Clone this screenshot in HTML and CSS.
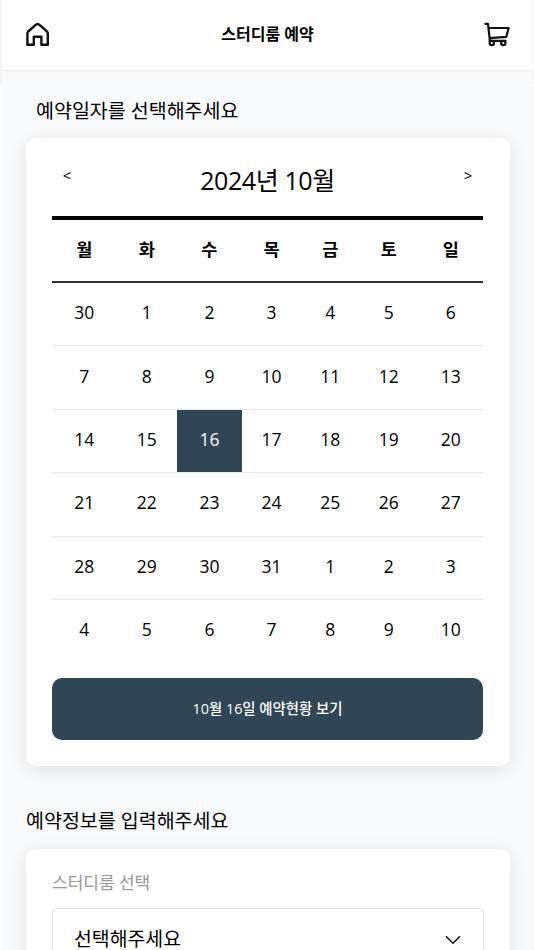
FILE: index.html
```html
<!DOCTYPE html>
<html lang="ko">
<head>
    <meta charset="UTF-8">
    <meta name="viewport" content="width=device-width, initial-scale=1.0">
    <title>스터디룸 예약</title>
    <link rel="stylesheet" href="styles.css">
</head>
<body>
    <div class="page">
        <header class="header">
            <svg class="icon" viewBox="0 0 26 26" fill="none" stroke="#111" stroke-width="2.4" stroke-linejoin="round">
                <path d="M2.4 23.8V12.3Q2.4 11.3 3.2 10.5L11 3.6Q12.6 2.4 14.2 3.6L22 10.5Q22.8 11.3 22.8 12.3V23.8H16.4V15.8H8.8V23.8Z"/>
            </svg>
            <h1 class="header-title">스터디룸 예약</h1>
            <svg class="icon" viewBox="0 0 26 26" fill="none" stroke="#111" stroke-width="2.2" stroke-linejoin="round" stroke-linecap="round">
                <path d="M1.4 2.8H4L5.6 17.2L22.3 15.9L24.6 7H4.5M5.6 17.2V19.8H21.5"/>
                <circle cx="7.8" cy="22" r="2.2"/>
                <circle cx="19.3" cy="22" r="2.2"/>
            </svg>
        </header>

        <main class="content">
            <h2 class="section-title date-title">예약일자를 선택해주세요</h2>
            <section class="card">
                <div class="month">
                    <button class="arrow">&lt;</button>
                    <span class="month-name">2024년 10월</span>
                    <button class="arrow">&gt;</button>
                </div>
                <table class="calendar">
                    <colgroup>
                        <col class="col-mon"><col class="col-tue"><col class="col-wed"><col class="col-thu"><col class="col-fri"><col class="col-sat"><col class="col-sun">
                    </colgroup>
                    <thead>
                        <tr><th>월</th><th>화</th><th>수</th><th>목</th><th>금</th><th>토</th><th>일</th></tr>
                    </thead>
                    <tbody>
                        <tr><td>30</td><td>1</td><td>2</td><td>3</td><td>4</td><td>5</td><td>6</td></tr>
                        <tr><td>7</td><td>8</td><td>9</td><td>10</td><td>11</td><td>12</td><td>13</td></tr>
                        <tr><td>14</td><td>15</td><td class="selected">16</td><td>17</td><td>18</td><td>19</td><td>20</td></tr>
                        <tr><td>21</td><td>22</td><td>23</td><td>24</td><td>25</td><td>26</td><td>27</td></tr>
                        <tr><td>28</td><td>29</td><td>30</td><td>31</td><td>1</td><td>2</td><td>3</td></tr>
                        <tr><td>4</td><td>5</td><td>6</td><td>7</td><td>8</td><td>9</td><td>10</td></tr>
                    </tbody>
                </table>
                <button class="status-btn">10월 16일 예약현황 보기</button>
            </section>

            <h2 class="section-title info-title">예약정보를 입력해주세요</h2>
            <section class="card info-card">
                <div class="label">스터디룸 선택</div>
                <div class="select">
                    <span>선택해주세요</span>
                    <svg class="chevron" viewBox="0 0 16 10" fill="none" stroke="#111" stroke-width="1.6">
                        <path d="M1 1.2L8 8.2L15 1.2"/>
                    </svg>
                </div>
            </section>
        </main>
    </div>
</body>
</html>
```

FILE: styles.css
```css
* {
    box-sizing: border-box;
}
body {
    margin: 0;
    height: 950px;
    overflow: hidden;
    padding: 0 1px 0 2px;
    background: linear-gradient(#f3f3f4 84px, #fdfdfd 84px);
    font-family: "Open Sans", "Noto Sans CJK KR", sans-serif;
    color: #000;
}
.page {
    height: 950px;
    overflow: hidden;
    background-color: #f8fafc;
}
.header {
    display: flex;
    justify-content: space-between;
    align-items: center;
    height: 71px;
    padding: 0 23px 2px;
    background-color: white;
    border-bottom: 1px solid #ebecee;
}
.icon {
    width: 26px;
    height: 26px;
}
.header-title {
    margin: 0;
    font-size: 16px;
    line-height: 24px;
    font-weight: bold;
}
.content {
    padding: 0 23px 0 24px;
}
.section-title {
    margin: 0;
    font-size: 19.5px;
    line-height: 30px;
    font-weight: normal;
}
.date-title {
    padding: 25px 10px 12px;
}
.info-title {
    padding: 40px 0 13px;
}
.card {
    height: 628px;
    padding: 0 26px;
    background-color: white;
    border-radius: 10px;
    box-shadow: 0 4px 20px rgba(0, 0, 0, 0.1);
}
.month {
    display: flex;
    justify-content: space-between;
    height: 78px;
    padding: 24px 7px 0 6px;
}
.month-name {
    font-size: 25px;
    line-height: 36px;
    letter-spacing: -0.4px;
}
.arrow {
    width: 18px;
    height: 26px;
    padding: 0;
    border: none;
    background: none;
    font-family: inherit;
    font-size: 15px;
    font-weight: 500;
    color: #000;
}
.calendar {
    width: 431px;
    border-collapse: separate;
    border-spacing: 0;
    table-layout: fixed;
    font-size: 17.5px;
    font-weight: 500;
    text-align: center;
}
.col-mon, .col-wed, .col-sun {
    width: 64.4px;
}
.col-tue {
    width: 60.8px;
}
.col-thu {
    width: 60px;
}
.col-fri {
    width: 57.5px;
}
.col-sat {
    width: 59.5px;
}
.calendar th, .calendar td {
    padding: 0 0 4px;
    line-height: 24px;
}
.calendar th {
    height: 67px;
    border-top: 4px solid black;
    border-bottom: 2px solid #333;
}
.calendar td {
    height: 63.4px;
    border-bottom: 1px solid #e8e8e8;
}
.calendar tr:last-child td {
    padding-bottom: 5px;
    border-bottom: none;
}
.calendar .selected {
    background-color: #304556;
    color: white;
}
.status-btn {
    display: block;
    width: 431px;
    height: 62px;
    margin-top: 15px;
    padding: 0 0 4px;
    border: none;
    border-radius: 10px;
    background-color: #304556;
    color: white;
    font-family: inherit;
    font-size: 14.4px;
    font-weight: 500;
}
.info-card {
    padding-top: 20px;
}
.label {
    margin-bottom: 11px;
    font-size: 17px;
    line-height: 28px;
    color: #999;
}
.select {
    display: flex;
    justify-content: space-between;
    align-items: center;
    height: 62px;
    padding: 0 22px 4px 21px;
    border: 1px solid #e5e5e5;
    border-radius: 5px;
    font-size: 19.4px;
}
.chevron {
    width: 16px;
    height: 10px;
    margin-top: 6px;
}
```
